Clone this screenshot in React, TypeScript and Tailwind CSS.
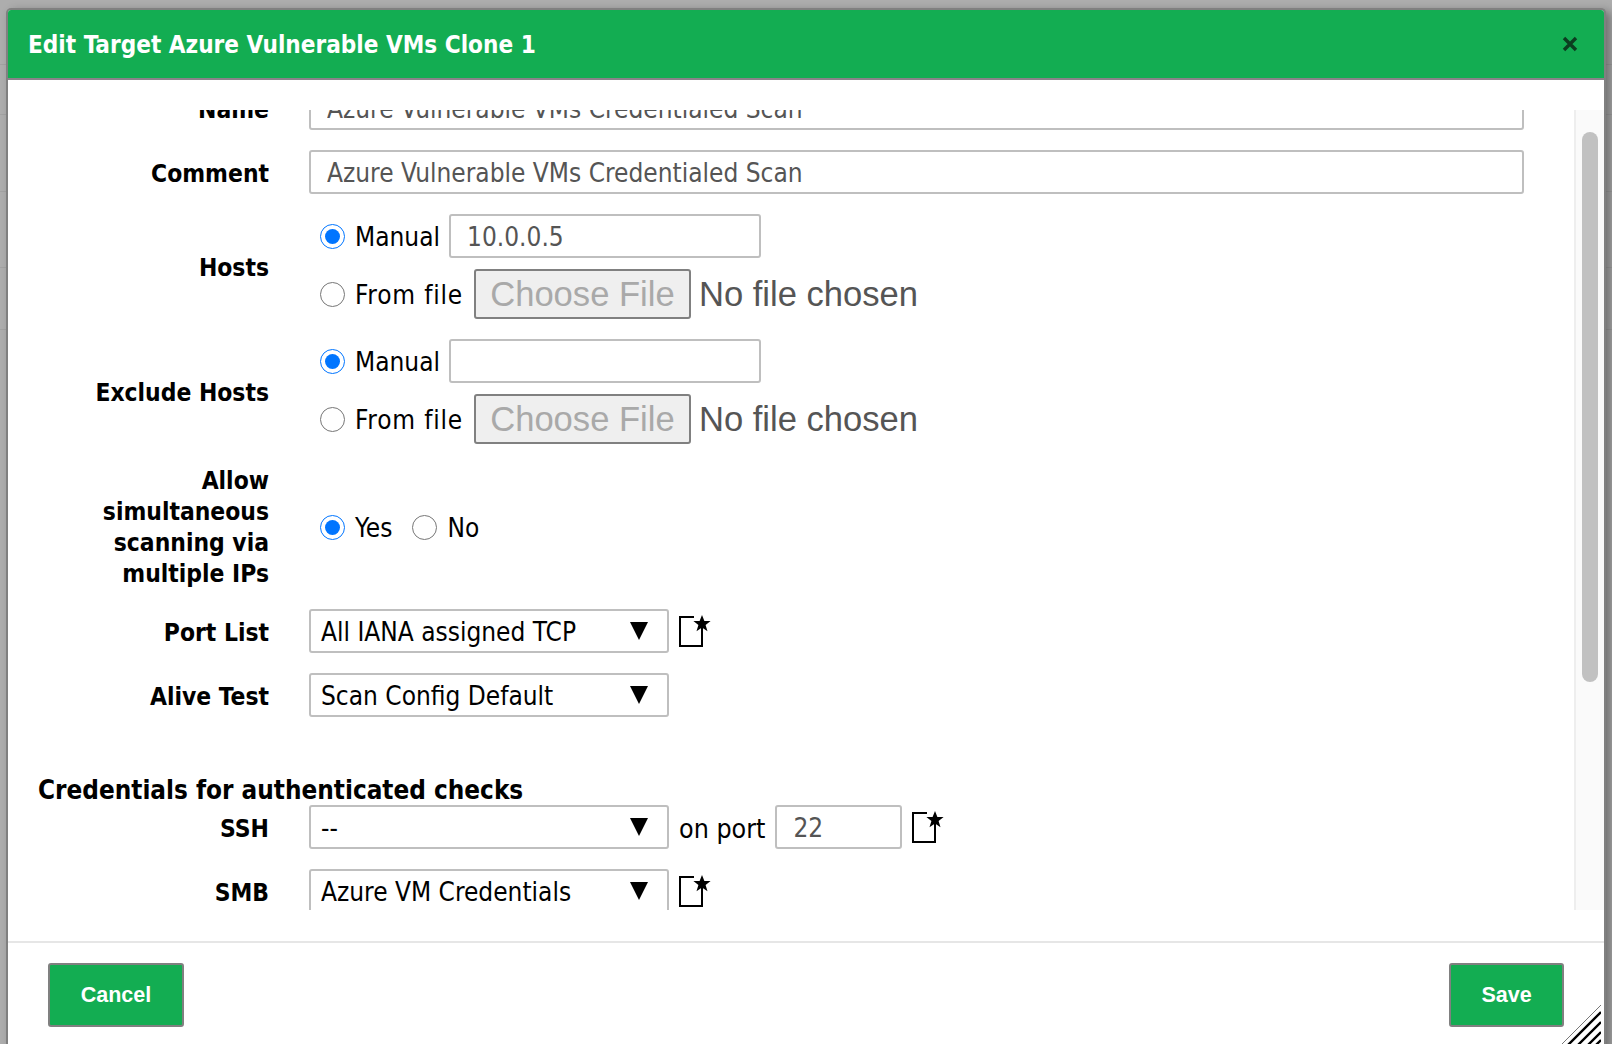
import type { ReactNode } from "react";

const FONT = "font-['DejaVu_Sans_Condensed','DejaVu_Sans',sans-serif]";

function NewIcon() {
  return (
    <svg width="32" height="32" viewBox="0 0 32 32" className="shrink-0 text-black">
      <path d="M23 12v19H1V2h14" fill="none" stroke="currentColor" strokeWidth="2" />
      <path
        d="M23 0l2.4 6h6.2l-5 3.9 1.9 6.3-5.5-3.7-5.5 3.7 1.9-6.3-5-3.9h6.2z"
        fill="currentColor"
      />
    </svg>
  );
}

function Select({ value }: { value: string }) {
  return (
    <div className="flex h-[44px] w-[360px] shrink-0 items-center justify-between rounded-[3px] border-2 border-[#bfbfbf] bg-white pl-[10px] pr-[18px] text-black">
      <span className="pt-[2px]">{value}</span>
      <svg width="20" height="20" viewBox="0 0 20 20">
        <path d="M1 1h18L10 19z" fill="black" />
      </svg>
    </div>
  );
}

function Row({ label, tall, children }: { label: ReactNode; tall?: boolean; children: ReactNode }) {
  return (
    <div className="grid grid-cols-[261px_1fr] items-center gap-x-[40px]">
      <div className={`text-right text-[24.4px] font-bold text-black ${tall ? "" : "pt-[2px]"}`}>{label}</div>
      <div className="min-w-0">{children}</div>
    </div>
  );
}

function Radio({ label, checked, name, wide }: { label: string; checked?: boolean; name: string; wide?: boolean }) {
  return (
    <label className="flex items-center gap-[10px] text-black">
      <input type="radio" name={name} defaultChecked={checked} className="m-0 h-[25px] w-[25px]" />
      <span className={wide ? "pt-[2px] tracking-[0.8px]" : "pt-[2px]"}>{label}</span>
    </label>
  );
}

function HostsField({ name, value }: { name: string; value: string }) {
  return (
    <div className="flex flex-col gap-[11px] pl-[11px]">
      <div className="flex items-center gap-[9px]">
        <Radio name={name} label="Manual" checked />
        <input
          defaultValue={value}
          className="h-[44px] w-[312px] rounded-[3px] border-2 border-[#bfbfbf] bg-white px-[16px] pt-[2px] text-[#555]"
        />
      </div>
      <div className="flex items-center gap-[11px]">
        <Radio name={name} label="From file" wide />
        <div className="flex items-center gap-[8px] font-['Liberation_Sans',sans-serif] text-[34.6px] text-[#555]">
          <button
            type="button"
            disabled
            className="h-[50px] w-[217px] rounded-[3px] border-2 border-[#808080] bg-[#efefef] text-[#a9a9a9]"
          >
            Choose File
          </button>
          <span>No file chosen</span>
        </div>
      </div>
    </div>
  );
}

// page rows showing behind the dialog's backdrop
const BACK_ROWS = [65, 50, 77, 76, 62];

export default function App() {
  return (
    <div className={`relative h-[1044px] overflow-hidden bg-[#adadad] text-[26px] leading-[31px] ${FONT}`}>
      <div>
        {BACK_ROWS.map((h, i) => (
          <div key={i} className="border-b border-[#a2a2a2]" style={{ height: h }} />
        ))}
      </div>

      <div className="absolute left-[6px] top-[8px] flex h-[1100px] w-[1600px] flex-col rounded-t-[5px] border-2 border-b-0 border-[#808080] bg-white shadow-[5px_3px_10px_rgba(0,0,0,0.35)]">
        <div className="flex h-[70px] shrink-0 items-center justify-between rounded-t-[3px] border-b-2 border-[#8a8289] bg-[#13ad52] pl-[20px] pr-[26px]">
          <h1 className="pt-[2px] text-[24.1px] font-bold text-white">Edit Target Azure Vulnerable VMs Clone 1</h1>
          <svg width="16" height="16" viewBox="0 0 16 16">
            <path d="M2 2l12 12M14 2L2 14" stroke="#0c3d20" strokeWidth="3.4" fill="none" />
          </svg>
        </div>

        <div className="h-[30px] shrink-0" />

        <div className="flex h-[800px] shrink-0">
          <div className="min-w-0 flex-1 overflow-hidden pr-[50px]">
            <div className="-mt-[24px] flex flex-col gap-[20px]">
              <Row label="Name">
                <input
                  defaultValue="Azure Vulnerable VMs Credentialed Scan"
                  className="block h-[44px] w-full rounded-[3px] border-2 border-[#bfbfbf] bg-white px-[16px] pt-[2px] text-[#555]"
                />
              </Row>
              <Row label="Comment">
                <input
                  defaultValue="Azure Vulnerable VMs Credentialed Scan"
                  className="block h-[44px] w-full rounded-[3px] border-2 border-[#bfbfbf] bg-white px-[16px] pt-[2px] text-[#555]"
                />
              </Row>
              <Row label="Hosts">
                <HostsField name="hosts" value="10.0.0.5" />
              </Row>
              <Row label="Exclude Hosts">
                <HostsField name="exclude" value="" />
              </Row>
              <div className="mt-[1px]">
                <Row
                  tall
                  label={
                    <>
                      Allow
                      <br />
                      simultaneous
                      <br />
                      scanning via
                      <br />
                      multiple IPs
                    </>
                  }
                >
                  <div className="flex items-center gap-[20px] pl-[11px]">
                    <Radio name="multi" label="Yes" checked />
                    <Radio name="multi" label="No" />
                  </div>
                </Row>
              </div>
              <Row label="Port List">
                <div className="flex items-center gap-[10px]">
                  <Select value="All IANA assigned TCP" />
                  <NewIcon />
                </div>
              </Row>
              <Row label="Alive Test">
                <Select value="Scan Config Default" />
              </Row>
              <div>
                <h3 className="mt-[37px] pl-[30px] pt-[2px] text-[25.85px] font-bold leading-[29px] text-black">
                  Credentials for authenticated checks
                </h3>
                <Row label="SSH">
                  <div className="flex items-center gap-[10px]">
                    <Select value="--" />
                    <span className="pt-[2px] text-[26.6px] text-black">on port</span>
                    <input
                      defaultValue="22"
                      className="h-[44px] w-[127px] rounded-[3px] border-2 border-[#bfbfbf] bg-white px-[16px] pt-[2px] text-[#555]"
                    />
                    <NewIcon />
                  </div>
                </Row>
              </div>
              <Row label="SMB">
                <div className="flex items-center gap-[10px]">
                  <Select value="Azure VM Credentials" />
                  <NewIcon />
                </div>
              </Row>
            </div>
          </div>

          <div className="w-[30px] shrink-0 border-l-2 border-[#eeeeee] bg-[#fafafa] pl-[6px] pt-[22px]">
            <div className="h-[550px] w-[16px] rounded-full bg-[#c1c1c1]" />
          </div>
        </div>

        <div className="mt-[31px] flex items-start justify-between border-t-2 border-[#e6e6e6] pl-[40px] pr-[40px] pt-[20px]">
          <button className="h-[64px] w-[136px] rounded-[3px] border-2 border-[#808080] bg-[#13ad52] font-['Liberation_Sans',sans-serif] text-[21.5px] font-bold text-white">
            Cancel
          </button>
          <button className="h-[64px] w-[115px] rounded-[3px] border-2 border-[#808080] bg-[#13ad52] font-['Liberation_Sans',sans-serif] text-[21.5px] font-bold text-white">
            Save
          </button>
        </div>

        <svg width="40" height="42" viewBox="0 0 40 42" className="absolute left-[1553px] top-[993px]">
          <path d="M0 42L40 2" stroke="#777" strokeWidth="1" />
          <path d="M7 42L40 9M17 42L40 19M27 42L40 29M35 42L40 37" stroke="black" strokeWidth="2.4" />
        </svg>
      </div>
    </div>
  );
}
